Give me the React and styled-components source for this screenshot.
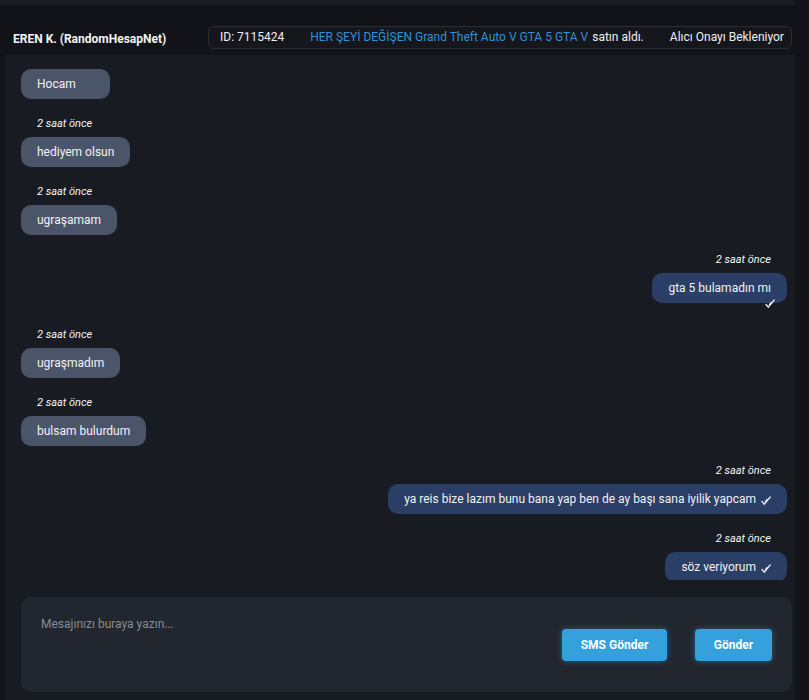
import React from 'react'
import styled, { createGlobalStyle } from 'styled-components'

const GlobalStyle = createGlobalStyle`
  * { box-sizing: border-box; }
  html, body {
    margin: 0;
    padding: 0;
    background: #121317;
    font-family: Roboto, "Noto Sans", "Liberation Sans", sans-serif;
    color: #eef0f3;
  }
`

const Page = styled.div`
  width: 809px;
  height: 700px;
  display: flex;
  flex-direction: column;
  overflow: hidden;
`

const TopStrip = styled.div`
  height: 5px;
  width: 795px;
  background: #1b1d24;
  border-top-right-radius: 6px;
`

const Header = styled.div`
  height: 50px;
  display: flex;
  align-items: center;
  padding: 14px 17px 0 13px;
  background: #121318;
`

const UserName = styled.div`
  font-size: 12px;
  font-weight: 700;
  margin-top: 4px;
  color: #f2f3f5;
`

const OrderInfo = styled.div`
  margin-left: auto;
  height: 23px;
  width: 584px;
  display: flex;
  align-items: center;
  padding: 0 10px 0 11px;
  border: 1px solid #2a2d35;
  border-radius: 5px;
  background: #15171c;
  font-size: 12px;
  white-space: nowrap;
`

const Divider = styled.span`
  width: 1px;
  height: 14px;
  background: #353841;
  margin: 0 13px;
`

const ProductLink = styled.span`
  color: #2f90d6;
  margin-right: 4px;
`

const ChatPanel = styled.div`
  flex: 1;
  width: 790px;
  margin-left: 5px;
  background: #191b22;
  display: flex;
  flex-direction: column;
  min-height: 0;
`

const MessageList = styled.div`
  height: 525px;
  overflow: hidden;
  padding: 14px 8px 0 16px;
  display: flex;
  flex-direction: column;
  gap: 18px;
`

const MessageGroup = styled.div`
  display: flex;
  flex-direction: column;
  align-items: ${p => (p.$mine ? 'flex-end' : 'flex-start')};
`

const TimeStamp = styled.div`
  font-size: 11px;
  line-height: 14px;
  font-style: italic;
  color: #f4f5f7;
  margin: 0 16px 6px;
`

const Bubble = styled.div`
  height: 30px;
  min-width: 89px;
  display: flex;
  align-items: center;
  gap: 5px;
  padding: 0 16px;
  border-radius: 10px;
  font-size: 12px;
  color: #f1f2f4;
  background: ${p => (p.$mine ? '#2b3e65' : '#4b5569')};

  svg { margin-top: 3px; }
`

const CheckBelow = styled.div`
  height: 11px;
  margin: -4px 12px 0 0;
  display: flex;
`

const Composer = styled.div`
  margin: 17px 3px 0 16px;
  height: 95px;
  background: #22262f;
  border-radius: 10px;
  padding: 20px;
  display: flex;
  align-items: center;
`

const MessageInput = styled.textarea`
  flex: 1;
  align-self: stretch;
  resize: none;
  background: transparent;
  border: none;
  outline: none;
  padding: 0;
  margin: 0;
  font-family: inherit;
  font-size: 12px;
  color: #e6e8eb;
  &::placeholder { color: #878c95; }
`

const SendButton = styled.button`
  height: 32px;
  width: ${p => (p.$wide ? '105px' : '77px')};
  padding: 0;
  margin-left: ${p => (p.$first ? '0' : '28px')};
  border: none;
  border-radius: 4px;
  background: #35a1dc;
  color: #ffffff;
  font-family: inherit;
  font-size: 12px;
  font-weight: 700;
  box-shadow: 0 0 6px rgba(53, 161, 220, 0.45);
  cursor: pointer;
`

// read receipt: a tick with a short second stroke inside it
const DoubleCheck = () => (
  <svg width="10" height="9" viewBox="0 0 10 9" fill="none" stroke="#e9edf5" strokeWidth="1.3" strokeLinecap="round" strokeLinejoin="round">
    <path d="M1 5.5 L3.4 8.2 L9.2 1" />
    <path d="M4.4 5.6 L6.2 3.4" />
  </svg>
)

const messages = [
  { text: 'Hocam' },
  { time: '2 saat önce', text: 'hediyem olsun' },
  { time: '2 saat önce', text: 'ugraşamam' },
  { time: '2 saat önce', text: 'gta 5 bulamadın mı', mine: true, checkBelow: true },
  { time: '2 saat önce', text: 'ugraşmadım' },
  { time: '2 saat önce', text: 'bulsam bulurdum' },
  { time: '2 saat önce', text: 'ya reis bize lazım bunu bana yap ben de ay başı sana iyilik yapcam', mine: true },
  { time: '2 saat önce', text: 'söz veriyorum', mine: true },
]

export default function App() {
  return (
    <Page>
      <GlobalStyle />
      <TopStrip />
      <Header>
        <UserName>EREN K. (RandomHesapNet)</UserName>
        <OrderInfo>
          <span>ID: 7115424</span>
          <Divider />
          <ProductLink>HER ŞEYİ DEĞİŞEN Grand Theft Auto V GTA 5 GTA V</ProductLink>
          <span>satın aldı.</span>
          <Divider />
          <span>Alıcı Onayı Bekleniyor</span>
        </OrderInfo>
      </Header>
      <ChatPanel>
        <MessageList>
          {messages.map((m, i) => (
            <MessageGroup key={i} $mine={m.mine}>
              {m.time && <TimeStamp>{m.time}</TimeStamp>}
              <Bubble $mine={m.mine}>
                <span>{m.text}</span>
                {m.mine && !m.checkBelow && <DoubleCheck />}
              </Bubble>
              {m.checkBelow && (
                <CheckBelow>
                  <DoubleCheck />
                </CheckBelow>
              )}
            </MessageGroup>
          ))}
        </MessageList>
        <Composer>
          <MessageInput placeholder="Mesajınızı buraya yazın..." />
          <SendButton $first $wide>SMS Gönder</SendButton>
          <SendButton>Gönder</SendButton>
        </Composer>
      </ChatPanel>
    </Page>
  )
}
